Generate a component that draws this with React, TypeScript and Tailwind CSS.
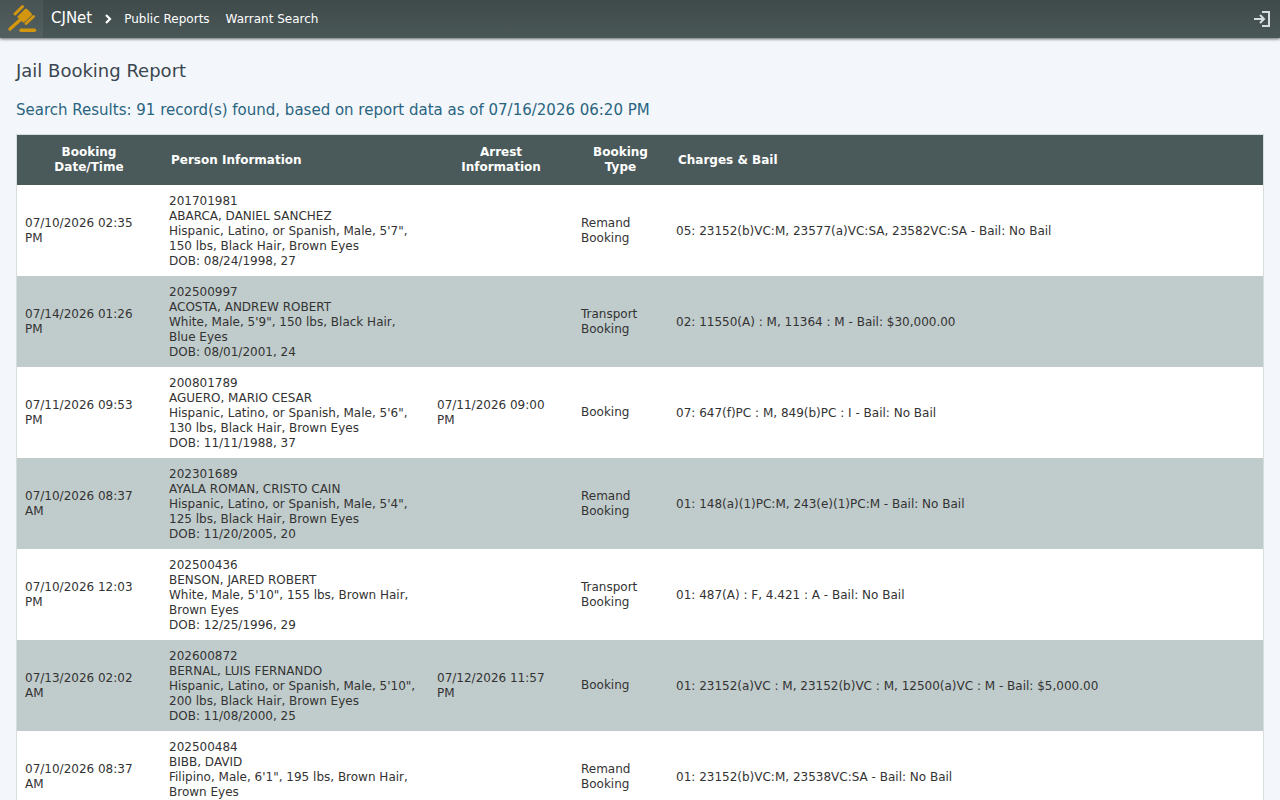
import React from 'react';

interface Booking {
  booked: string;
  id: string;
  name: string;
  description: string;
  dob: string;
  arrested?: string;
  type: string;
  charges: string;
}

const bookings: Booking[] = [
  {
    booked: '07/10/2026 02:35 PM',
    id: '201701981',
    name: 'ABARCA, DANIEL SANCHEZ',
    description: 'Hispanic, Latino, or Spanish, Male, 5\'7", 150 lbs, Black Hair, Brown Eyes',
    dob: '08/24/1998, 27',
    type: 'Remand Booking',
    charges: '05: 23152(b)VC:M, 23577(a)VC:SA, 23582VC:SA - Bail: No Bail',
  },
  {
    booked: '07/14/2026 01:26 PM',
    id: '202500997',
    name: 'ACOSTA, ANDREW ROBERT',
    description: 'White, Male, 5\'9", 150 lbs, Black Hair, Blue Eyes',
    dob: '08/01/2001, 24',
    type: 'Transport Booking',
    charges: '02: 11550(A) : M, 11364 : M - Bail: $30,000.00',
  },
  {
    booked: '07/11/2026 09:53 PM',
    id: '200801789',
    name: 'AGUERO, MARIO CESAR',
    description: 'Hispanic, Latino, or Spanish, Male, 5\'6", 130 lbs, Black Hair, Brown Eyes',
    dob: '11/11/1988, 37',
    arrested: '07/11/2026 09:00 PM',
    type: 'Booking',
    charges: '07: 647(f)PC : M, 849(b)PC : I - Bail: No Bail',
  },
  {
    booked: '07/10/2026 08:37 AM',
    id: '202301689',
    name: 'AYALA ROMAN, CRISTO CAIN',
    description: 'Hispanic, Latino, or Spanish, Male, 5\'4", 125 lbs, Black Hair, Brown Eyes',
    dob: '11/20/2005, 20',
    type: 'Remand Booking',
    charges: '01: 148(a)(1)PC:M, 243(e)(1)PC:M - Bail: No Bail',
  },
  {
    booked: '07/10/2026 12:03 PM',
    id: '202500436',
    name: 'BENSON, JARED ROBERT',
    description: 'White, Male, 5\'10", 155 lbs, Brown Hair, Brown Eyes',
    dob: '12/25/1996, 29',
    type: 'Transport Booking',
    charges: '01: 487(A) : F, 4.421 : A - Bail: No Bail',
  },
  {
    booked: '07/13/2026 02:02 AM',
    id: '202600872',
    name: 'BERNAL, LUIS FERNANDO',
    description: 'Hispanic, Latino, or Spanish, Male, 5\'10", 200 lbs, Black Hair, Brown Eyes',
    dob: '11/08/2000, 25',
    arrested: '07/12/2026 11:57 PM',
    type: 'Booking',
    charges: '01: 23152(a)VC : M, 23152(b)VC : M, 12500(a)VC : M - Bail: $5,000.00',
  },
  {
    booked: '07/10/2026 08:37 AM',
    id: '202500484',
    name: 'BIBB, DAVID',
    description: 'Filipino, Male, 6\'1", 195 lbs, Brown Hair, Brown Eyes',
    dob: '',
    type: 'Remand Booking',
    charges: '01: 23152(b)VC:M, 23538VC:SA - Bail: No Bail',
  },
];

const GavelIcon: React.FC = () => (
  <svg viewBox="0 0 32 32" className="h-8 w-8" fill="none" stroke="#d3960f" strokeLinecap="round" aria-hidden="true">
    <path d="M4 26 14 17" strokeWidth="3.4" />
    <path d="M9 11 16.500 3.500" strokeWidth="3" />
    <path d="M20 20.500 27.500 13.500" strokeWidth="3" />
    <path d="M13 14 20 7 24.500 11.500 17.500 18Z" fill="#d3960f" strokeWidth="3" strokeLinejoin="round" />
    <path d="M15 27.300h13.500" strokeWidth="3.400" />
  </svg>
);

const Header: React.FC = () => (
  <header className="flex h-[38px] items-center bg-linear-to-b from-[#3f4a4a] to-[#4a5757] text-white shadow-[0_1px_3px_rgba(0,0,0,0.6)]">
    <a href="#" aria-label="Home" className="flex h-full w-[43px] items-center justify-center bg-white/5">
      <GavelIcon />
    </a>
    <a href="#" className="ml-2 pb-0.5 text-[15px] leading-5">CJNet</a>
    <svg viewBox="0 0 12 12" className="mx-2.5 h-3 w-3" fill="none" stroke="currentColor" strokeWidth="2.2" aria-hidden="true">
      <path d="M4 2 8 6 4 10" />
    </svg>
    <nav className="flex gap-4 text-[12px]">
      <a href="#">Public Reports</a>
      <a href="#">Warrant Search</a>
    </nav>
    <button type="button" aria-label="Log in" className="mr-2 ml-auto">
      <svg viewBox="0 0 20 20" className="h-5 w-5" fill="none" stroke="#d5dddd" strokeWidth="2" aria-hidden="true">
        <path d="M10 3h7v14h-7M2 10h10M8 6l4 4-4 4" />
      </svg>
    </button>
  </header>
);

export default function App() {
  return (
    <div className="min-h-screen bg-[#f3f7fb] font-['DejaVu_Sans',sans-serif] text-[#333333]">
      <Header />
      <main className="px-4 pt-5">
        <h1 className="text-[18px] leading-[26px] text-[#3b4650]">Jail Booking Report</h1>
        <h2 className="mt-3.5 text-[15px] leading-6 text-[#2a6480]">
          Search Results: 91 record(s) found, based on report data as of 07/16/2026 06:20 PM
        </h2>
        <div className="mt-3 border border-[#d5dddd] bg-white">
          <table className="w-full table-fixed text-left text-[12px] leading-[15px]">
            <colgroup>
              <col className="w-36" />
              <col className="w-[268px]" />
              <col className="w-36" />
              <col className="w-[95px]" />
              <col />
            </colgroup>
            <thead className="bg-[#4a5959] text-white">
              <tr>
                <th className="p-[10px] text-center">Booking<br />Date/Time</th>
                <th className="p-[10px]">Person Information</th>
                <th className="p-[10px] text-center">Arrest<br />Information</th>
                <th className="p-[10px] text-center">Booking<br />Type</th>
                <th className="p-[10px]">Charges &amp; Bail</th>
              </tr>
            </thead>
            <tbody>
              {bookings.map((b) => (
                <tr key={b.id} className="even:bg-[#c0cbcb]">
                  <td className="p-2">{b.booked}</td>
                  <td className="px-2 pt-[9px] pb-[7px]">
                    <p>{b.id}</p>
                    <p>{b.name}</p>
                    <p>{b.description}</p>
                    <p>{b.dob ? `DOB: ${b.dob}` : '\u00a0'}</p>
                  </td>
                  <td className="p-2">{b.arrested}</td>
                  <td className="p-2">{b.type}</td>
                  <td className="px-2 pt-[9px] pb-[7px]">{b.charges}</td>
                </tr>
              ))}
            </tbody>
          </table>
        </div>
      </main>
    </div>
  );
}
